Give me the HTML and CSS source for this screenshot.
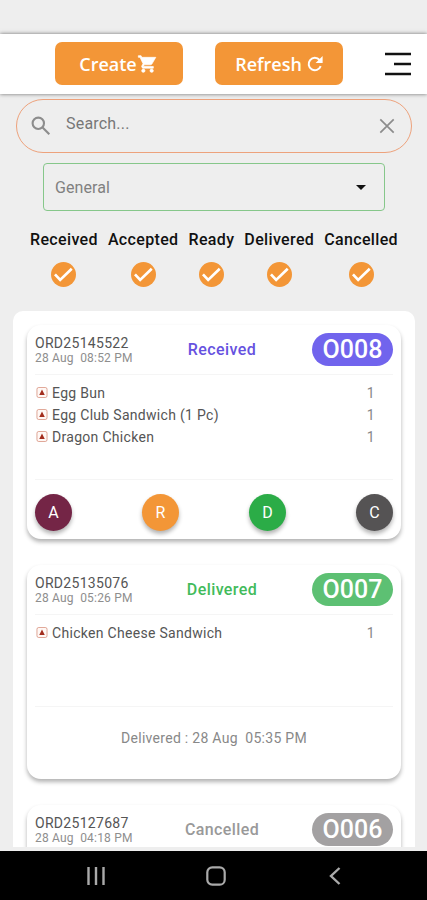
FILE: index.html
```html
<!DOCTYPE html>
<html lang="en">
  <head>
    <meta charset="utf-8">
    <title>Orders</title>
    <link rel="stylesheet" href="styles.css">
  </head>
  <body>
    <div class="app">
      <header class="header">
        <button class="btn btn-create">
          <span>Create</span>
          <svg width="21" height="20" viewBox="0 0 24 24" fill="currentColor" stroke="currentColor" stroke-width=".8"><path d="M7 18c-1.100 0-1.990.9-1.990 2S5.900 22 7 22s2-.9 2-2-.9-2-2-2zM1 2v2h2l3.600 7.590-1.350 2.450C4.520 15.370 5.480 17 7 17h12v-2H7.420c-.14 0-.25-.11-.25-.25l.03-.12.900-1.630h7.450c.75 0 1.410-.41 1.750-1.030L22 4H5.210l-.94-2H1zm16 16c-1.100 0-1.990.9-1.990 2s.89 2 1.990 2 2-.9 2-2-.9-2-2-2z"/></svg>
        </button>
        <button class="btn btn-refresh">
          <span>Refresh</span>
          <svg width="16" height="16" viewBox="0 0 16 16" fill="none" stroke="currentColor" stroke-width="2"><path d="M13.700 10.200A6.200 6.200 0 1 1 12.600 4"/><path d="M15.600 0v7H8.600z" fill="currentColor" stroke="none"/></svg>
        </button>
        <svg class="menu" width="26" height="24" viewBox="0 0 26 24" stroke="#111" stroke-width="2.600"><path d="M0 2h26M9 12h17M0 22h26"/></svg>
      </header>

      <div class="search">
        <svg width="20" height="20" viewBox="0 0 20 20" fill="none" stroke="#8c8c8c" stroke-width="2.100"><circle cx="7.300" cy="7.300" r="5.700"/><path d="M11.600 11.600l6.700 6.700"/></svg>
        <span class="search-text">Search...</span>
        <svg width="16" height="16" viewBox="0 0 16 16" stroke="#8c8c8c" stroke-width="1.700"><path d="M1.300 1.300l13.400 13.400M14.700 1.300L1.300 14.700"/></svg>
      </div>

      <div class="select">
        <span>General</span>
        <svg width="10" height="5" viewBox="0 0 10 5"><path d="M0 0h10L5 5z" fill="#111"/></svg>
      </div>

      <div class="filters">
        <div class="filter"><span>Received</span><svg class="check" viewBox="0 0 24 24"><circle cx="12" cy="12" r="12"/><path d="M3.800 11.900l5 5.300L19.900 6.500"/></svg></div>
        <div class="filter"><span>Accepted</span><svg class="check" viewBox="0 0 24 24"><circle cx="12" cy="12" r="12"/><path d="M3.800 11.900l5 5.300L19.900 6.500"/></svg></div>
        <div class="filter"><span>Ready</span><svg class="check" viewBox="0 0 24 24"><circle cx="12" cy="12" r="12"/><path d="M3.800 11.900l5 5.300L19.900 6.500"/></svg></div>
        <div class="filter"><span>Delivered</span><svg class="check" viewBox="0 0 24 24"><circle cx="12" cy="12" r="12"/><path d="M3.800 11.900l5 5.300L19.900 6.500"/></svg></div>
        <div class="filter"><span>Cancelled</span><svg class="check" viewBox="0 0 24 24"><circle cx="12" cy="12" r="12"/><path d="M3.800 11.900l5 5.300L19.900 6.500"/></svg></div>
      </div>

      <main class="orders">
        <div class="card">
          <div class="card-head">
            <div class="order">
              <div class="order-id">ORD25145522</div>
              <div class="order-date">28 Aug&nbsp; 08:52 PM</div>
            </div>
            <div class="status status-received">Received</div>
            <div class="pill pill-received">O008</div>
          </div>
          <div class="items">
            <div class="item"><svg class="mark" viewBox="0 0 12 12"><rect x=".5" y=".5" width="11" height="11" rx="2"/><path d="M6 2.800L9 8.800H3z"/></svg><span>Egg Bun</span><span class="qty">1</span></div>
            <div class="item"><svg class="mark" viewBox="0 0 12 12"><rect x=".5" y=".5" width="11" height="11" rx="2"/><path d="M6 2.800L9 8.800H3z"/></svg><span>Egg Club Sandwich (1 Pc)</span><span class="qty">1</span></div>
            <div class="item"><svg class="mark" viewBox="0 0 12 12"><rect x=".5" y=".5" width="11" height="11" rx="2"/><path d="M6 2.800L9 8.800H3z"/></svg><span>Dragon Chicken</span><span class="qty">1</span></div>
          </div>
          <div class="actions">
            <button class="round round-a">A</button>
            <button class="round round-r">R</button>
            <button class="round round-d">D</button>
            <button class="round round-c">C</button>
          </div>
        </div>

        <div class="card">
          <div class="card-head">
            <div class="order">
              <div class="order-id">ORD25135076</div>
              <div class="order-date">28 Aug&nbsp; 05:26 PM</div>
            </div>
            <div class="status status-delivered">Delivered</div>
            <div class="pill pill-delivered">O007</div>
          </div>
          <div class="items items-short">
            <div class="item"><svg class="mark" viewBox="0 0 12 12"><rect x=".5" y=".5" width="11" height="11" rx="2"/><path d="M6 2.800L9 8.800H3z"/></svg><span>Chicken Cheese Sandwich</span><span class="qty">1</span></div>
          </div>
          <div class="delivered-at">Delivered : 28 Aug&nbsp; 05:35 PM</div>
        </div>

        <div class="card">
          <div class="card-head">
            <div class="order">
              <div class="order-id">ORD25127687</div>
              <div class="order-date">28 Aug&nbsp; 04:18 PM</div>
            </div>
            <div class="status status-cancelled">Cancelled</div>
            <div class="pill pill-cancelled">O006</div>
          </div>
        </div>
      </main>

      <nav class="navbar">
        <svg width="18" height="18" viewBox="0 0 18 18" stroke="#aaa" stroke-width="2.400"><path d="M1.500 0v18M9 0v18M16.500 0v18"/></svg>
        <svg class="home" width="20" height="20" viewBox="0 0 20 20" fill="none" stroke="#aaa" stroke-width="2.200"><rect x="1.300" y="1.300" width="17.400" height="17.400" rx="5"/></svg>
        <svg width="12" height="18" viewBox="0 0 12 18" fill="none" stroke="#aaa" stroke-width="2.400"><path d="M10.500 1L2 9l8.500 8"/></svg>
      </nav>
    </div>
  </body>
</html>
```
FILE: styles.css
```css
* {
  box-sizing: border-box;
}
body {
  margin: 0;
  font-family: Roboto, sans-serif;
  background-color: #eee;
}
button {
  border: none;
  padding: 0;
  font-family: inherit;
  color: white;
}
svg {
  display: block;
  flex-shrink: 0;
}
.app {
  display: flex;
  flex-direction: column;
  height: 900px;
  padding-top: 34px;
  overflow: hidden;
}
.header {
  display: flex;
  align-items: center;
  flex-shrink: 0;
  height: 60px;
  padding: 0 16px 1px 55px;
  background-color: white;
  box-shadow: 0 0 4px rgba(0, 0, 0, 0.55);
}
.btn {
  display: flex;
  align-items: center;
  justify-content: center;
  width: 128px;
  height: 43px;
  border-radius: 7px;
  background-color: #f39637;
  font-family: "Open Sans", sans-serif;
  font-size: 18px;
  font-weight: 600;
}
.btn-create {
  margin-right: 32px;
  padding-right: 1px;
}
.btn-refresh {
  gap: 5px;
}
.menu {
  margin-left: auto;
}
.search {
  display: flex;
  align-items: center;
  flex-shrink: 0;
  height: 54px;
  margin: 5px 15px 0 16px;
  padding: 0 16px 0 14px;
  border: 1px solid #eda27c;
  border-radius: 27px;
}
.search-text {
  flex: 1;
  padding: 0 0 5px 15px;
  font-size: 16px;
  letter-spacing: 0.2px;
  color: #777;
}
.select {
  display: flex;
  align-items: center;
  justify-content: space-between;
  flex-shrink: 0;
  height: 48px;
  margin: 10px 42px 0 43px;
  padding: 0 18px 0 11px;
  border: 1px solid #86c78a;
  border-radius: 4px;
  font-size: 16px;
  letter-spacing: 0.1px;
  color: #808080;
}
.filters {
  display: flex;
  justify-content: space-between;
  flex-shrink: 0;
  height: 100px;
  padding: 19px 29px 0 30px;
}
.filter {
  display: flex;
  flex-direction: column;
  align-items: center;
  gap: 12px;
  font-size: 16px;
  font-weight: 500;
  line-height: 20px;
  letter-spacing: 0.35px;
  color: #111;
}
.check {
  width: 25px;
  height: 25px;
}
.check circle {
  fill: #f39637;
}
.check path {
  fill: none;
  stroke: white;
  stroke-width: 2.6;
}
.orders {
  flex: 1;
  min-height: 0;
  margin: 0 12px 4px 13px;
  padding: 14px 14px 0;
  border-radius: 10px 10px 0 0;
  background-color: white;
  overflow: hidden;
}
.card {
  display: flex;
  flex-direction: column;
  height: 214px;
  margin-bottom: 26px;
  padding: 0 8px;
  border-radius: 14px;
  background-color: white;
  box-shadow: 0 3px 4px rgba(0, 0, 0, 0.3);
}
.card-head {
  display: grid;
  grid-template-columns: 110px 1fr 110px;
  align-items: center;
  flex-shrink: 0;
  height: 50px;
  border-bottom: 1px solid #f5f5f5;
}
.order {
  padding-top: 1px;
}
.order-id {
  font-size: 14px;
  line-height: 16px;
  letter-spacing: 0.3px;
  color: #555;
}
.order-date {
  font-size: 12px;
  line-height: 15px;
  letter-spacing: 0.2px;
  white-space: nowrap;
  color: #8e8e8e;
}
.status {
  padding-left: 16px;
  text-align: center;
  font-size: 16px;
  font-weight: 500;
  letter-spacing: 0.4px;
}
.status-received {
  color: #6652e0;
}
.status-delivered {
  color: #42bb5b;
}
.status-cancelled {
  color: #999;
}
.pill {
  justify-self: end;
  width: 81px;
  height: 33px;
  border-radius: 17px;
  font-size: 25px;
  font-weight: 500;
  line-height: 34px;
  text-align: center;
  color: white;
}
.pill-received {
  background-color: #7164ed;
}
.pill-delivered {
  background-color: #5dc073;
}
.pill-cancelled {
  background-color: #a3a1a2;
}
.items {
  height: 104px;
  padding-top: 7px;
}
.items-short {
  height: 91px;
}
.item {
  display: flex;
  align-items: center;
  height: 22px;
  font-size: 14px;
  letter-spacing: 0.3px;
  color: #555;
}
.mark {
  width: 12px;
  height: 11px;
  margin: 0 4px 1px 1px;
}
.mark rect {
  fill: #fff8f5;
  stroke: #dc9c8b;
}
.mark path {
  fill: #a32d1d;
}
.qty {
  margin-left: auto;
  padding-right: 18px;
  color: #888;
}
.actions {
  display: flex;
  align-items: center;
  justify-content: space-between;
  flex: 1;
  padding-top: 6px;
  border-top: 1px solid #f5f5f5;
}
.round {
  width: 37px;
  height: 37px;
  border-radius: 50%;
  font-size: 16px;
  box-shadow: 0 3px 4px rgba(0, 0, 0, 0.3);
}
.round-a {
  background-color: #742546;
}
.round-r {
  background-color: #f39637;
}
.round-d {
  background-color: #2bac47;
}
.round-c {
  background-color: #555354;
}
.delivered-at {
  flex: 1;
  padding-top: 23px;
  border-top: 1px solid #f5f5f5;
  font-size: 14px;
  letter-spacing: 0.28px;
  text-align: center;
  color: #888;
}
.navbar {
  display: flex;
  align-items: center;
  justify-content: space-between;
  flex-shrink: 0;
  height: 49px;
  padding: 0 86px 0 87px;
  background-color: black;
}
.home {
  margin-right: 3px;
}
```
